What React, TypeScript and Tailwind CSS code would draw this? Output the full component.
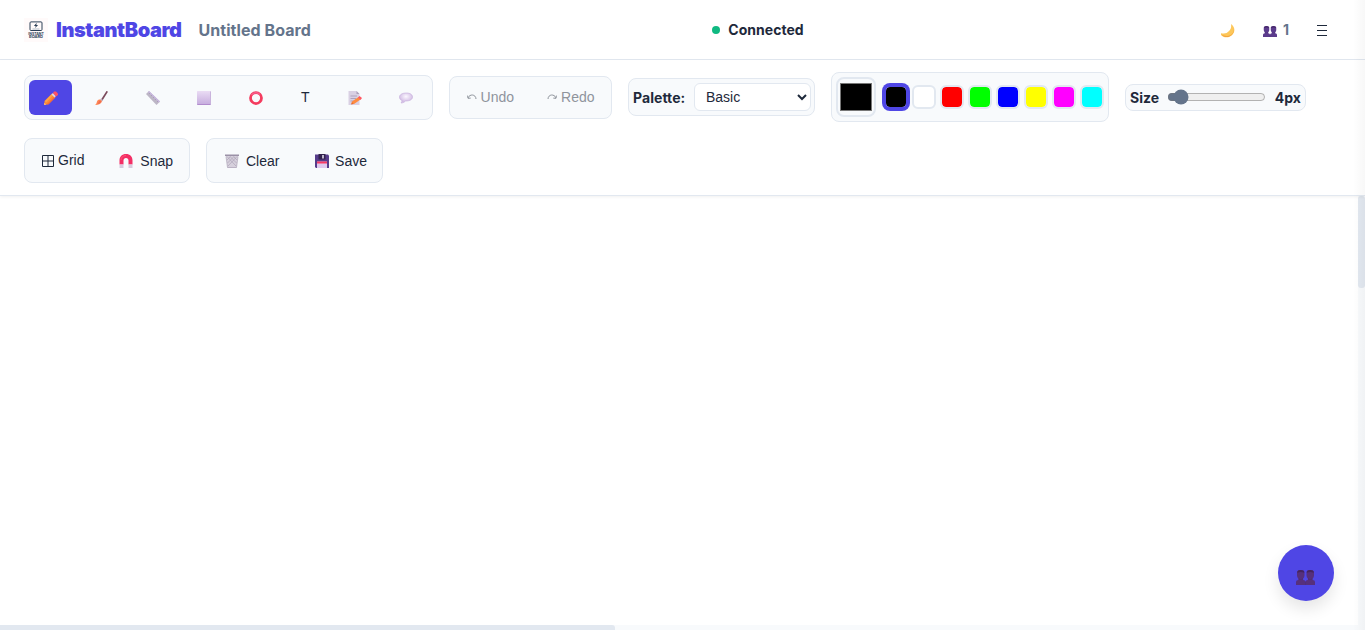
import { useState, type ReactNode } from "react";

const groupBase = "flex items-center rounded-lg border border-[#e2e8f0] bg-[#f8fafc] p-1";
const arial = "font-['Liberation_Sans',Arial,sans-serif]";

function Icon({ children, className = "size-3.5" }: { children: ReactNode; className?: string }) {
  return (
    <svg viewBox="0 0 28 28" className={`${className} shrink-0`} fill="none" aria-hidden="true">
      {children}
    </svg>
  );
}

function Logo() {
  return (
    <svg viewBox="0 0 24 24" className="size-6 bg-[#fffafa]" aria-label="InstantBoard logo">
      <rect x="6" y="3.9" width="12" height="8.6" rx="1" fill="none" stroke="#2c4057" strokeWidth="1" />
      <path d="M12.7 4.8 9.9 8h1.8l-.6 2 3-3h-1.8z" fill="#2c4057" />
      <path d="M8.5 11h7" stroke="#91a0b0" strokeWidth=".7" />
      <text x="12" y="16.6" textAnchor="middle" fontSize="3.7" textLength="15.5" lengthAdjust="spacingAndGlyphs" fontWeight="700" fontFamily="Inter, sans-serif" fill="#2c4057">INSTANT</text>
      <text x="12" y="20" textAnchor="middle" fontSize="3.5" textLength="14" lengthAdjust="spacingAndGlyphs" fontWeight="700" fontFamily="Inter, sans-serif" fill="#2c4057">BOARD</text>
    </svg>
  );
}

const Pencil = () => (
  <Icon>
    <path d="M1 20 16 5l7 7L8 27H1z" fill="#ff8b35" />
    <path d="M2 20 17 5l2 2L4 23z" fill="#ffa64b" />
    <path d="m6 26 15-15 2 2L9 27z" fill="#f46a3a" />
    <path d="m15 7 3-3 6 6-3 3z" fill="#d9d6e2" />
    <path d="m18 4 2-3h4l4 4v3l-4 3z" fill="#ff5263" />
    <path d="M0 28v-5l5 5z" fill="#ffb06a" />
  </Icon>
);

const Brush = () => (
  <Icon>
    <path d="M23 0h2v3L15 19l-3-2z" fill="#7b4a5c" />
    <path d="m12 15 4 3-2 3-4-3z" fill="#b9afc2" />
    <path d="m10 17 4 3c-1 5-6 8-14 8 3-2 3-4 4-7 1-3 3-4 6-4z" fill="#ff8754" />
    <path d="m9 19 4 2c-2 3-5 5-8 5z" fill="#ef6d52" />
  </Icon>
);

const Ruler = () => (
  <Icon>
    <path d="M0 6 6 0l22 21-7 7z" fill="#bdb6c6" />
    <path d="m6 0 22 21-2 2L4 2z" fill="#c8b6df" />
    <path d="m8 4-2 2m6 2-2 2m6 2-2 2m6 2-2 2m6 2-2 2" stroke="#9d91ad" strokeWidth="1.3" />
  </Icon>
);

const Square = () => (
  <Icon>
    <defs>
      <linearGradient id="square-fill" x1="0" y1="0" x2="0" y2="1">
        <stop stopColor="#eadcf4" />
        <stop offset="1" stopColor="#c5abdd" />
      </linearGradient>
    </defs>
    <rect width="28" height="28" rx="1" fill="url(#square-fill)" />
    <path d="M1 27h26" stroke="#b18bcd" strokeWidth="2" />
    <path d="M27 1v26" stroke="#c9b3dc" strokeWidth="2" />
  </Icon>
);

const Circle = () => (
  <Icon>
    <circle cx="14" cy="14" r="11" stroke="#f43b5e" strokeWidth="5.5" />
    <path d="M5 8a11 11 0 0 1 17-1" stroke="#f85c8b" strokeWidth="3" />
  </Icon>
);

const Memo = () => (
  <Icon>
    <path d="M1 0h16l6 6v22H1z" fill="#d9d0e3" />
    <path d="M17 0v6h6z" fill="#aaa0ba" />
    <path d="M5 10h13M5 15h11M5 20h7" stroke="#a99db9" strokeWidth="1.8" />
    <path d="m7 26 1-5 13-9 4 5-13 9z" fill="#ff8b3f" />
    <path d="m20 13 3-3 5 4-3 4z" fill="#ff5864" />
    <path d="m6 27 2-5 3 4z" fill="#e76e31" />
  </Icon>
);

const Speech = () => (
  <Icon>
    <defs>
      <radialGradient id="speech-fill" cx=".5" cy=".35">
        <stop stopColor="#fbf7ff" />
        <stop offset="1" stopColor="#d5c0e6" />
      </radialGradient>
    </defs>
    <path d="M15 4C7 4 1 7 1 12c0 4 2 6 5 7 0 2-1 4-2 5 4 0 7-2 9-4 9 0 14-3 14-8 0-5-5-8-12-8z" fill="url(#speech-fill)" stroke="#c8b0dd" strokeWidth="1.3" />
  </Icon>
);

function People({ className = "h-[11px] w-3.5", body = "#5b3b8c", shade = "#46286b" }: { className?: string; body?: string; shade?: string }) {
  const bust = "M1.5 3Q2 0 7 0t5.5 3v5q0 3-2 4.500v2q3.500 0 3.500 3V22H0v-4.500q0-3 3.500-3v-2Q1.500 11 1.500 8z";
  return (
    <svg viewBox="0 0 28 22" preserveAspectRatio="none" className={`${className} shrink-0`} aria-hidden="true">
      <path d={bust} fill={body} />
      <path d={bust} fill={body} transform="translate(14 0)" />
      <path d="M2 3Q2 0 7 0t5 3v1q-5-2-10 0zM16 3q0-3 5-3t5 3v1q-5-2-10 0zM4 12.500q3 1.500 6 0v1H4zM18 12.500q3 1.500 6 0v1h-6zM13.700 17h.6v5h-.6z" fill={shade} />
    </svg>
  );
}

const Moon = () => (
  <Icon>
    <path d="M20 0c7 5 9 13 4 20-6 8-18 9-24 2l-1-4c7 2 13 1 17-4 4-4 5-8 4-14z" fill="#fdc75a" />
    <path d="M25 9c2 5-1 10-6 13-6 3-12 2-18-1 6 8 17 6 22-1 3-4 4-7 2-11z" fill="#f3a641" />
  </Icon>
);

const Magnet = () => (
  <Icon>
    <path d="M1 21V13C1 5 6 0 14 0s13 5 13 13v8h-8v-8c0-3-2-5-5-5s-5 2-5 5v8z" fill="#f32f65" />
    <path d="M1 21h8v7H1zm18 0h8v7h-8z" fill="#d7cadd" />
    <path d="M4 12c0-5 4-9 10-9" stroke="#ff5275" strokeWidth="2" />
  </Icon>
);

const Trash = () => (
  <Icon>
    <path d="M2 4h24l-3 24H5z" fill="#d6d0dc" />
    <path d="M0 1h28v3H0z" fill="#9b91a7" />
    <path d="m4 5 18 19M10 5l13 13M17 5l7 7M24 5 6 24M18 5 5 18M11 5l-7 7M2 5l3 22h18l3-22" stroke="#aaa1b5" strokeWidth="1.3" />
  </Icon>
);

const Floppy = () => (
  <Icon>
    <path d="M0 1h26l2 2v25H2l-2-2z" fill="#573c8b" />
    <path d="M7 0h14v11H7z" fill="#33224d" />
    <path d="M14 2h4v7h-4z" fill="#bdb3cb" />
    <path d="M4 15h20v13H4z" fill="#dfc9ee" />
    <path d="M4 15h20v4H4z" fill="#f83964" />
  </Icon>
);

const GridIcon = () => (
  <svg viewBox="0 0 12 12" className="size-3 shrink-0" fill="none" stroke="#1e293b" aria-hidden="true">
    <path d="M.5.5h11v11H.5zM6 .5v11M.5 6h11" />
  </svg>
);

const Arc = ({ flip = false }: { flip?: boolean }) => (
  <svg viewBox="0 0 10 8" className={flip ? "h-2 w-2.5 -scale-x-100" : "h-2 w-2.5"} fill="none" stroke="#8f949c" aria-hidden="true">
    <path d="M1.2 4.8C2.5.8 8.8 1 9 6M.6 2.6l.4 2.7 2.7-.2" strokeWidth="1" />
  </svg>
);

const tools = [
  { name: "Pencil", icon: <Pencil /> },
  { name: "Brush", icon: <Brush /> },
  { name: "Line", icon: <Ruler /> },
  { name: "Rectangle", icon: <Square /> },
  { name: "Circle", icon: <Circle /> },
  { name: "Text", icon: "T" },
  { name: "Note", icon: <Memo /> },
  { name: "Comment", icon: <Speech /> },
];

const swatches = [
  { value: "#000000", className: "bg-black" },
  { value: "#ffffff", className: "bg-white" },
  { value: "#ff0000", className: "bg-[#ff0000]" },
  { value: "#00ff00", className: "bg-[#00ff00]" },
  { value: "#0000ff", className: "bg-[#0000ff]" },
  { value: "#ffff00", className: "bg-[#ffff00]" },
  { value: "#ff00ff", className: "bg-[#ff00ff]" },
  { value: "#00ffff", className: "bg-[#00ffff]" },
];

function Header() {
  return (
    <header className="relative z-10 flex h-[60px] shrink-0 items-center justify-between border-b border-[#e2e8f0] bg-white pl-6 pr-[37px] shadow-[0_1px_3px_rgba(0,0,0,0.06)]">
      <div className="flex w-[400px] items-center">
        <Logo />
        <h1 className="ml-2 w-[126.5px] text-xl leading-6 font-black tracking-[-0.42px] whitespace-nowrap text-[#4f46e5]">InstantBoard</h1>
        <span className="ml-4 text-base leading-6 font-bold tracking-[0.06px] text-[#64748b]">Untitled Board</span>
      </div>
      <div className="ml-[164px] flex items-center gap-2 text-sm font-bold tracking-[0.04px]">
        <span className="size-2 rounded-full bg-[#10b981]" />
        Connected
      </div>
      <div className="flex w-[400px] items-center justify-end">
        <button aria-label="Theme" className="mr-7 mt-0.5"><Moon /></button>
        <div className="mr-[27px] flex items-center gap-1.5 text-sm font-bold text-[#64748b]">
          <span className="mt-1"><People /></span>1
        </div>
        <button aria-label="Menu" className="flex w-3 justify-center">
          <svg viewBox="0 0 12 12" className="size-3" stroke="#1e293b" aria-hidden="true"><path d="M1 1.5h10M1 6.5h10M1 11.5h10" /></svg>
        </button>
      </div>
    </header>
  );
}

function Toolbar() {
  const [tool, setTool] = useState("Pencil");
  const [color, setColor] = useState("#000000");
  const [size, setSize] = useState(4);
  return (
    <div className="relative z-10 flex shrink-0 flex-wrap items-center gap-4 border-b border-[#e2e8f0] bg-white px-6 py-3 shadow-[0_1px_3px_rgba(0,0,0,0.06)]">
      <div className={`${groupBase} w-[409px] gap-2`}>
        {tools.map((t) => (
          <button
            key={t.name}
            aria-label={t.name}
            onClick={() => setTool(t.name)}
            className={`flex h-[35px] items-center justify-center rounded-md text-sm ${arial} ${t.name === "Text" ? "w-[40.25px]" : "w-[43.25px]"} ${tool === t.name ? "bg-[#4f46e5]" : ""}`}
          >
            <span className={t.name === "Text" ? "" : "mt-0.5"}>{t.icon}</span>
          </button>
        ))}
      </div>

      <div className={`${groupBase} h-[43px] w-[163px] gap-2 text-sm text-[#8f949c] ${arial}`}>
        <button disabled className="flex w-[73px] items-center justify-center gap-1"><Arc />Undo</button>
        <button disabled className="flex w-[73px] items-center justify-center gap-1"><Arc flip />Redo</button>
      </div>

      <div className={`${groupBase} h-[38px] w-[187px] justify-between pr-[3px]`}>
        <span className="mt-0.5 text-sm font-bold tracking-[0.06px]">Palette:</span>
        <select className={`h-7 w-[117px] rounded-md border border-[#e2e8f0] bg-white px-[7px] text-sm ${arial}`} defaultValue="Basic">
          <option>Basic</option>
          <option>Pastel</option>
        </select>
      </div>

      <div className={`${groupBase} h-[50px] gap-2`}>
        <button aria-label="Custom color" className="flex size-10 items-center justify-center rounded-lg border-2 border-[#e2e8f0] bg-[#f8fafc]">
          <span className="h-7 w-8 border border-[#777]" style={{ backgroundColor: color }} />
        </button>
        <div className="flex gap-1">
          {swatches.map((s) => (
            <button
              key={s.value}
              aria-label={s.value}
              onClick={() => setColor(s.value)}
              className={`size-6 rounded-md border-2 bg-clip-padding ${s.className} ${color === s.value ? "border-[#4f46e5] shadow-[0_0_0_2px_#4f46e5]" : "border-[#e2e8f0]"}`}
            />
          ))}
        </div>
      </div>

      <div className={`${groupBase} h-[27px] w-[181px] justify-between text-sm font-bold`}>
        <span className="mt-0.5">Size</span>
        <input
          type="range"
          aria-label="Size"
          min={1}
          max={50}
          value={size}
          onChange={(e) => setSize(Number(e.target.value))}
          className="h-4 w-[99px] accent-[#64748b]"
        />
        <span className="mt-0.5">{size}px</span>
      </div>

      <div className={`${groupBase} h-[45px] w-[166px] justify-between pl-[17px] pr-4 text-sm ${arial}`}>
        <button className="flex items-center gap-1"><GridIcon /><span className="-mt-0.5">Grid</span></button>
        <button className="flex items-center gap-[7px]"><Magnet />Snap</button>
      </div>

      <div className={`${groupBase} h-[45px] w-[177px] justify-between pl-[18px] pr-[15px] text-sm ${arial}`}>
        <button className="flex items-center gap-[7px]"><Trash />Clear</button>
        <button className="flex items-center gap-1.5"><Floppy />Save</button>
      </div>
    </div>
  );
}

export default function App() {
  return (
    <div className="relative flex h-[630px] w-full flex-col overflow-hidden bg-white font-['Inter',sans-serif] text-[#1e293b]">
      <Header />
      <Toolbar />
      <main className="flex min-h-0 flex-1 flex-col">
        <div className="flex min-h-0 flex-1">
          <div className="flex-1 bg-white" />
          <div className="w-[7px] bg-[#f8fafc]">
            <div className="h-[92px] rounded-[3px] bg-[#e2e8f0]" />
          </div>
        </div>
        <div className="h-[5px] bg-[#f8fafc]">
          <div className="h-full w-[615px] rounded-tr-[3px] bg-[#e2e8f0]" />
        </div>
      </main>
      <button aria-label="Collaborators" className="absolute right-[31px] bottom-[29px] z-20 flex size-14 items-center justify-center rounded-full bg-[#4f46e5] pt-[9px] pr-px shadow-[0_8px_16px_rgba(0,0,0,0.1)]">
        <People className="h-[15px] w-[19px]" body="#56307c" shade="#442460" />
      </button>
      <div className="pointer-events-none absolute inset-y-0 right-0 z-30 w-3 bg-linear-to-r from-transparent to-black/3" />
    </div>
  );
}
